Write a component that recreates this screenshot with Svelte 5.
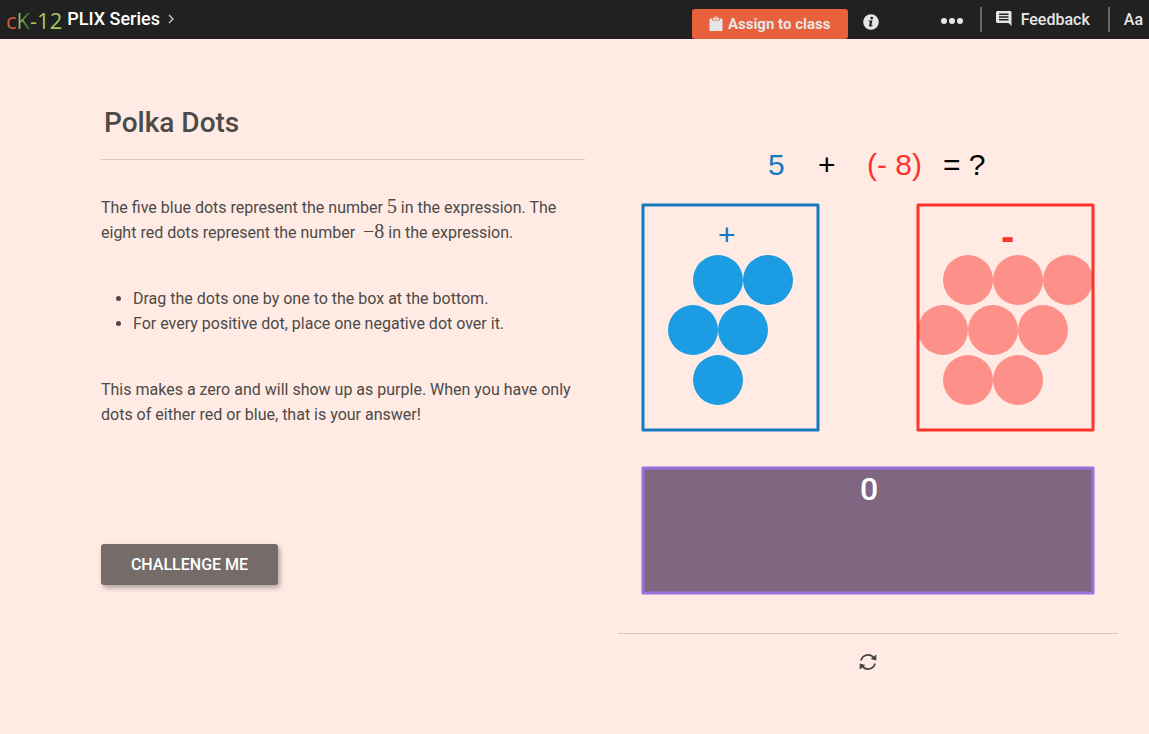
<script lang="ts">
  interface Dot {
    x: number;
    y: number;
  }

  const RADIUS = 25;

  const blueDots: Dot[] = [
    { x: 100, y: 150 },
    { x: 150, y: 150 },
    { x: 75, y: 200 },
    { x: 125, y: 200 },
    { x: 100, y: 250 },
  ];

  const redDots: Dot[] = [
    { x: 350, y: 150 },
    { x: 400, y: 150 },
    { x: 450, y: 150 },
    { x: 325, y: 200 },
    { x: 375, y: 200 },
    { x: 425, y: 200 },
    { x: 350, y: 250 },
    { x: 400, y: 250 },
  ];

  let total = $state(0);
</script>

<header class="topbar">
  <a class="logo" href="/" aria-label="cK-12">
    <span class="logo-c">c</span><span class="logo-k">K</span><span class="logo-n">-12</span>
  </a>
  <a class="series" href="/plix">
    PLIX Series
    <svg width="6" height="10" viewBox="0 0 6 10" aria-hidden="true">
      <path d="M1 1l4 4-4 4" fill="none" stroke="currentColor" stroke-width="1.3" />
    </svg>
  </a>

  <div class="tools">
    <button type="button" class="assign">
      <svg width="14" height="16" viewBox="0 0 14 16" aria-hidden="true">
        <path
          fill="currentColor"
          d="M1.5 2.500h1.700v2h7.600v-2h1.700c.6 0 1 .4 1 1V14c0 .6-.4 1-1 1h-11c-.6 0-1-.4-1-1V3.500c0-.6.4-1 1-1z"
        />
        <path
          fill="currentColor"
          fill-rule="evenodd"
          d="M4 3.700V2.200c0-.3.2-.5.5-.5h.8a1.800 1.800 0 0 1 3.400 0h.8c.3 0 .5.2.5.5v1.500zM7 1.200a.7.7 0 1 0 0 1.400.7.7 0 0 0 0-1.400z"
        />
      </svg>
      Assign to class
    </button>
    <button type="button" class="icon info" aria-label="Information">
      <svg width="16" height="16" viewBox="0 0 16 16" aria-hidden="true">
        <circle cx="8" cy="8" r="7.800" fill="currentColor" />
        <circle cx="8.700" cy="4.100" r="1.400" fill="#212121" />
        <path d="M5.800 6.600h3.700l-1.200 4.600 1.400-.3-.3 1c-1 .7-3.700 1.300-3.300-.7l.8-3.500-1.300-.2z" fill="#212121" />
      </svg>
    </button>
    <button type="button" class="icon more" aria-label="More options">
      <svg width="22" height="6" viewBox="0 0 22 6" aria-hidden="true">
        <circle cx="3" cy="3" r="3" fill="currentColor" />
        <circle cx="11" cy="3" r="3" fill="currentColor" />
        <circle cx="19" cy="3" r="3" fill="currentColor" />
      </svg>
    </button>
    <button type="button" class="text-tool feedback">
      <svg width="16" height="15" viewBox="0 0 16 15" aria-hidden="true">
        <path
          fill="currentColor"
          fill-rule="evenodd"
          d="M1.500 0h12.500c.8 0 1.500.7 1.500 1.500V15l-3-3h-11C.7 12 0 11.300 0 10.500v-9C0 .7.7 0 1.500 0zM3 2.500V4h9.500V2.500zM3 5.300v1.500h9.500V5.300zM3 8.100v1.500h9.500V8.100z"
        />
      </svg>
      Feedback
    </button>
    <button type="button" class="text-tool type">Aa</button>
  </div>
</header>

<main class="page">
  <section class="lesson">
    <h1>Polka Dots</h1>
    <p>
      The five blue dots represent the number <span class="math">5</span> in the expression. The
      eight red dots represent the number &nbsp;<span class="math">−8</span> in the expression.
    </p>
    <ul>
      <li>Drag the dots one by one to the box at the bottom.</li>
      <li>For every positive dot, place one negative dot over it.</li>
    </ul>
    <p>
      This makes a zero and will show up as purple. When you have only dots of either red or blue,
      that is your answer!
    </p>
    <button type="button" class="challenge">CHALLENGE ME</button>
  </section>

  <section class="activity">
    <svg class="board" viewBox="0 0 500 500" role="img" aria-label="5 + (- 8) = ?">
      <g class="expression">
        <text x="150" y="45" fill="#1678be">5</text>
        <text x="200" y="45">+</text>
        <text x="249" y="45" fill="#fb352d">(- 8)</text>
        <text x="325" y="45">= ?</text>
      </g>

      <rect class="box blue" x="25" y="75" width="175" height="225" />
      <rect class="box red" x="300" y="75" width="175" height="225" />
      <rect class="box purple" x="25" y="338" width="450" height="125" />

      <text class="sign" x="100" y="115" fill="#1678be">+</text>
      <text class="sign minus" x="383" y="120" fill="#fb352d">-</text>
      <text class="total" x="251" y="370">{total}</text>

      {#each blueDots as dot}
        <circle cx={dot.x} cy={dot.y} r={RADIUS} fill="#1c9ce3" />
      {/each}
      {#each redDots as dot}
        <circle cx={dot.x} cy={dot.y} r={RADIUS} fill="#fb352d" fill-opacity="0.5" />
      {/each}
    </svg>
    <div class="controls">
      <button type="button" class="reset" aria-label="Reset" onclick={() => (total = 0)}>
        <svg width="18" height="18" viewBox="0 0 18 18" aria-hidden="true">
          <path
            d="M2 7.500A7.200 7.200 0 0 1 15 5.200M16 10.500A7.200 7.200 0 0 1 3 12.800"
            fill="none"
            stroke="currentColor"
            stroke-width="1.700"
          />
          <path d="M17.300 1.600v6l-5.700-1.500zM.7 16.400v-6l5.700 1.500z" fill="currentColor" />
        </svg>
      </button>
    </div>
  </section>
</main>

<style>
  :global(body) {
    background: #ffeae4;
    color: #4c4a48;
    font-family: Roboto, 'Liberation Sans', sans-serif;
    font-size: 16px;
    line-height: 25px;
  }

  button {
    border: 0;
    padding: 0;
    font: inherit;
    color: inherit;
    background: none;
    cursor: pointer;
  }

  svg {
    display: block;
  }

  .topbar {
    display: flex;
    align-items: center;
    height: 39px;
    padding-left: 6px;
    background: #212121;
    color: #e6e6e6;
    white-space: nowrap;
  }

  .logo {
    font-family: 'Open Sans', sans-serif;
    font-size: 22px;
    line-height: 36px;
    text-decoration: none;
  }
  .logo-c {
    color: #d05a32;
  }
  .logo-k {
    background: linear-gradient(90deg, #9dbf5c 15%, #3f7a3c 80%);
    background-clip: text;
    color: transparent;
  }
  .logo-n {
    color: #a5c661;
  }

  .series {
    display: flex;
    align-items: center;
    gap: 8px;
    margin-left: 5px;
    color: #fff;
    font-weight: 500;
    font-size: 18px;
    line-height: 24px;
    padding-bottom: 1px;
    text-decoration: none;
  }
  .series svg {
    color: #ccc;
  }

  .tools {
    display: flex;
    align-items: center;
    margin-left: auto;
    font-weight: 500;
  }

  .assign {
    display: flex;
    align-items: center;
    justify-content: center;
    gap: 5px;
    width: 156px;
    height: 30px;
    margin-top: 9px;
    border-radius: 3px;
    background: #e9603c;
    font-weight: 700;
    font-size: 15px;
  }

  .info {
    margin: 4px 62px 0 15px;
  }

  .more {
    margin: 2px 17px 0 0;
  }

  .text-tool {
    display: flex;
    gap: 9px;
    height: 25px;
    border-left: 2px solid #666;
    padding: 0 18px 0 14px;
  }
  .feedback svg {
    margin-top: 4px;
  }
  .type {
    padding-right: 6px;
  }

  .page {
    display: grid;
    grid-template-columns: 484fr 500fr;
    gap: 33px;
    padding: 66px 31px 48px 101px;
  }

  h1 {
    margin: 0 0 35px;
    border-bottom: 1px solid #d9c8c3;
    padding: 1px 3px 19px;
    font-weight: 500;
    font-size: 28px;
    line-height: 34px;
  }

  p {
    margin: 0;
  }

  .math {
    font-family: 'Liberation Serif', serif;
    font-size: 20px;
    line-height: 20px;
  }

  ul {
    margin: 41px 0;
    padding-left: 32px;
  }

  .challenge {
    width: 177px;
    height: 41px;
    margin-top: 117px;
    border-radius: 3px;
    background: #756c69;
    box-shadow: 2px 3px 5px rgba(0, 0, 0, 0.3);
    color: #fff;
    font-weight: 500;
  }

  .activity {
    padding-top: 25px;
  }

  .board {
    width: 100%;
  }

  .expression text,
  .sign {
    font-family: 'Liberation Sans', Arial, sans-serif;
    font-size: 30px;
  }
  .sign.minus {
    font-weight: 700;
    font-size: 40px;
    text-anchor: start;
  }
  .total {
    fill: #fff;
    font-weight: 500;
    font-size: 32px;
    text-anchor: middle;
  }

  .box {
    fill: none;
    stroke-width: 3;
    stroke-linejoin: round;
  }
  .blue {
    stroke: #1678be;
  }
  .red {
    stroke: #fb352d;
  }
  .purple {
    fill: #7f6782;
    stroke: #9a70dc;
  }

  .controls {
    display: flex;
    justify-content: center;
    margin-top: 3px;
    border-top: 1px solid #d9c8c3;
    padding-top: 19px;
  }
  .reset {
    color: #444;
  }
</style>
